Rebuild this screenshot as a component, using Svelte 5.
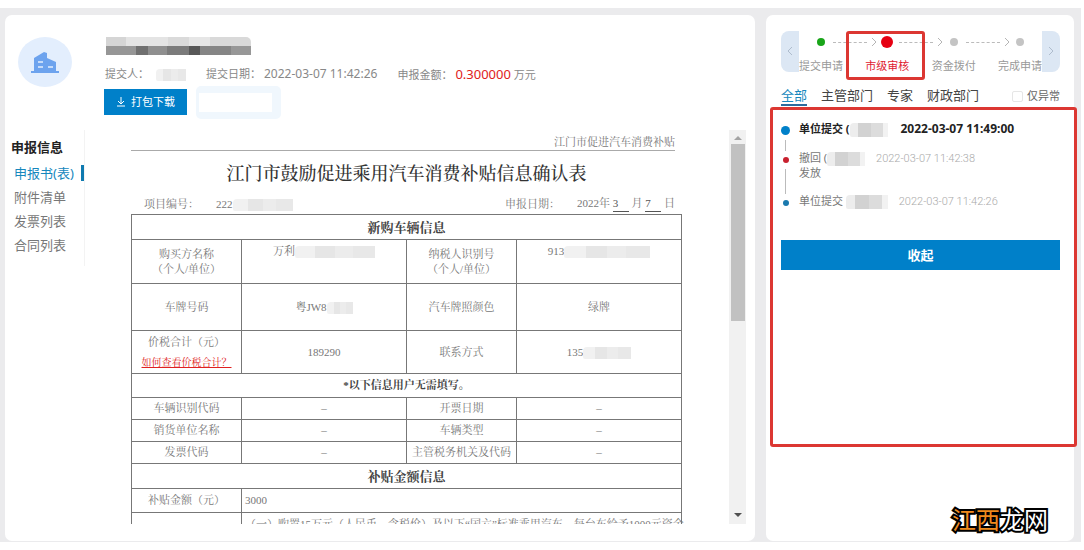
<script>
  const menu = ['申报书(表)', '附件清单', '发票列表', '合同列表'];
  const tabs = ['全部', '主管部门', '专家', '财政部门'];
  const steps = [
    { name: '提交申请', state: 'done' },
    { name: '市级审核', state: 'current' },
    { name: '资金拨付', state: 'todo' },
    { name: '完成申请', state: 'todo' }
  ];
  const extraRows = [
    ['车辆识别代码', '开票日期'],
    ['销货单位名称', '车辆类型'],
    ['发票代码', '主管税务机关及代码']
  ];

  let activeMenu = $state('申报书(表)');
  let activeTab = $state('全部');
  let onlyAbnormal = $state(false);
</script>

<div class="page">
  <main class="card detail">
    <header class="head">
      <div class="avatar">
        <svg width="30" height="24" viewBox="0 0 30 24" aria-hidden="true">
          <path d="M4 21V8l10-6 3 1v5l9 4v9h3v2H1v-2z" fill="#6da3ee" />
          <path d="M8 12h5M8 17h5M18 17h5" stroke="#e3eefd" stroke-width="1.4" />
        </svg>
      </div>
      <div class="head-info">
        <div class="title-mask"></div>
        <p class="facts">
          <span>提交人：<i class="mask name"></i></span>
          <span>提交日期：<b>2022-03-07 11:42:26</b></span>
          <span>申报金额：<em>0.300000</em> 万元</span>
        </p>
        <div class="actions">
          <button class="download">
            <svg width="10" height="10" viewBox="0 0 10 10" aria-hidden="true">
              <path d="M5 0v6M2 4l3 3 3-3M1 9h8" fill="none" stroke="#fff" />
            </svg>
            打包下载
          </button>
          <span class="ghost"></span>
        </div>
      </div>
    </header>

    <div class="body">
      <nav class="side">
        <h2>申报信息</h2>
        {#each menu as item}
          <button class:active={item === activeMenu} onclick={() => (activeMenu = item)}>{item}</button>
        {/each}
      </nav>

      <div class="doc">
        <p class="doc-head">江门市促进汽车消费补贴</p>
        <h1>江门市鼓励促进乘用汽车消费补贴信息确认表</h1>
        <div class="doc-meta">
          <span>项目编号：</span>
          <span class="number">222<i class="mask number-mask"></i></span>
          <span class="date-label">申报日期：</span>
          <span>2022年 <u>3</u> 月 <u>7</u> 日</span>
        </div>
        <table>
          <colgroup>
            <col class="key" />
            <col class="value" />
            <col class="key" />
            <col class="value" />
          </colgroup>
          <tbody>
            <tr class="section"><th colspan="4">新购车辆信息</th></tr>
            <tr class="buyer">
              <td>购买方名称<br />（个人/单位）</td>
              <td class="top">万利<i class="mask w80"></i></td>
              <td>纳税人识别号<br />（个人/单位）</td>
              <td class="top">913<i class="mask w86"></i></td>
            </tr>
            <tr class="plate">
              <td>车牌号码</td>
              <td>粤JW8<i class="mask w26"></i></td>
              <td>汽车牌照颜色</td>
              <td>绿牌</td>
            </tr>
            <tr class="price">
              <td>价税合计（元）<a href="#help">如何查看价税合计？</a></td>
              <td>189290</td>
              <td>联系方式</td>
              <td>135<i class="mask w48"></i></td>
            </tr>
            <tr class="note"><th colspan="4">*以下信息用户无需填写。</th></tr>
            {#each extraRows as [left, right]}
              <tr class="extra">
                <td>{left}</td>
                <td>–</td>
                <td>{right}</td>
                <td>–</td>
              </tr>
            {/each}
            <tr class="section"><th colspan="4">补贴金额信息</th></tr>
            <tr class="amount">
              <td>补贴金额（元）</td>
              <td class="left" colspan="3">3000</td>
            </tr>
            <tr class="rule">
              <td></td>
              <td class="left" colspan="3">（一）购置15万元（人民币，含税价）及以下“国六”标准乘用汽车，每台车给予1000元资金</td>
            </tr>
          </tbody>
        </table>
      </div>

      <div class="scrollbar">
        <span class="arrow up"></span>
        <span class="thumb"></span>
        <span class="arrow down"></span>
      </div>
    </div>
  </main>

  <aside class="card progress">
    <div class="steps">
      <button class="prev" aria-label="上一步">
        <svg width="6" height="10" viewBox="0 0 6 10"><path d="M5 1L1 5l4 4" fill="none" stroke="#aebccd" /></svg>
      </button>
      <ol>
        {#each steps as step, i}
          <li class={step.state}>
            <span class="dot"></span>
            {#if i < steps.length - 1}
              <span class="link">
                <svg width="6" height="10" viewBox="0 0 6 10"><path d="M1 1l4 4-4 4" fill="none" stroke="#b5b5b5" /></svg>
              </span>
            {/if}
            <span class="label">{step.name}</span>
          </li>
        {/each}
      </ol>
      <button class="next" aria-label="下一步">
        <svg width="6" height="10" viewBox="0 0 6 10"><path d="M1 1l4 4-4 4" fill="none" stroke="#aebccd" /></svg>
      </button>
    </div>

    <div class="tabs">
      {#each tabs as tab}
        <button class:active={tab === activeTab} onclick={() => (activeTab = tab)}>{tab}</button>
      {/each}
      <label><input type="checkbox" bind:checked={onlyAbnormal} />仅异常</label>
    </div>

    <section class="history">
      <ul>
        <li class="latest">
          <span class="who">单位提交 (<i class="mask dark w38"></i></span>
          <time>2022-03-07 11:49:00</time>
        </li>
        <li class="back">
          <span class="who">撤回 (<i class="mask dark w38"></i></span>
          <time>2022-03-07 11:42:38</time>
          <p>发放</p>
        </li>
        <li>
          <span class="who">单位提交 <i class="mask dark w42"></i></span>
          <time>2022-03-07 11:42:26</time>
        </li>
      </ul>
      <button class="fold">收起</button>
    </section>
  </aside>

  <div class="brand"><span>江西</span>龙网</div>
</div>

<style>
  :global(body) {
    margin: 0;
    background: #fff;
  }
  .page {
    position: relative;
    display: flex;
    gap: 11px;
    box-sizing: border-box;
    height: 100vh;
    padding: 7px 7px 1px 5px;
    border: solid #fff;
    border-width: 8px 3px 8px 0;
    background: #ebebed;
    font-family: 'Noto Sans', 'Noto Sans CJK SC', sans-serif;
    font-size: 11px;
    line-height: 16px;
    color: #888;
  }
  button {
    padding: 0;
    border: 0;
    background: none;
    font: inherit;
    color: inherit;
    cursor: pointer;
  }
  h1, h2, p, ul, ol { margin: 0; padding: 0; }
  ul, ol { list-style: none; }
  .card {
    display: flex;
    flex-direction: column;
    box-sizing: border-box;
    background: #fff;
    border-radius: 7px;
  }
  .detail { flex: 750; min-width: 0; }
  .progress { flex: 308; min-width: 0; }

  /* blurred-out private data */
  .mask {
    display: inline-block;
    height: 12px;
    vertical-align: middle;
    border-radius: 4px 0 0 2px;
    background: linear-gradient(90deg, #f1f1f1 0 25%, #e6e6e6 25% 50%, #ececec 50% 72%, #e8e8e8 72%);
  }
  .mask.dark {
    height: 14px;
    background: linear-gradient(90deg, #ededed 0 22%, #d2d2d2 22% 55%, #dcdcdc 55% 86%, #f2f2f2 86%);
  }
  .name { width: 30px; margin-left: 7px; }
  .w26 { width: 26px; }
  .w38 { width: 38px; }
  .w42 { width: 42px; }
  .w48 { width: 48px; }
  .w80 { width: 80px; }
  .w86 { width: 86px; }

  /* header */
  .head { display: flex; padding: 22px 13px 0; }
  .avatar {
    display: flex;
    align-items: center;
    justify-content: center;
    width: 54px;
    height: 50px;
    border-radius: 50%;
    background: #e3eefd;
  }
  .head-info { flex: 1; padding-left: 32px; }
  .title-mask {
    width: 145px;
    height: 18px;
    margin-left: 2px;
    background:
      linear-gradient(90deg, #969696 0 21%, #707070 21% 29%, #8f8f8f 29% 42%, #7b7b7b 42% 57%, #585858 57% 65%, #858585 65% 86%, #979797 86%) 0 9px / 100% 9px no-repeat,
      linear-gradient(90deg, #d5d5d5 0 14%, #e4e4e4 14% 43%, #dadada 43% 57%, #e6e6e6 57% 72%, #d9d9d9 72%);
    border-radius: 0 5px 0 0;
  }
  .facts { display: flex; gap: 20px; margin: 11px 0 0 1px; white-space: nowrap; }
  .facts b { margin-left: 3px; font-size: 12px; font-weight: 400; }
  .facts em { margin-left: 3px; font-size: 13px; font-style: normal; color: #e02020; }
  .actions { display: flex; align-items: center; height: 38px; gap: 9px; }
  .download {
    display: flex;
    align-items: center;
    justify-content: center;
    gap: 5px;
    width: 83px;
    height: 26px;
    background: #0080c9;
    color: #fff;
  }
  .ghost {
    width: 73px;
    height: 19px;
    border: solid #f0f7fd;
    border-width: 7px 9px 7px 3px;
    border-radius: 5px;
  }

  /* side menu + document */
  .body { display: flex; flex: 1; min-height: 0; margin: 9px 9px 17px 0; }
  .side {
    display: flex;
    flex-direction: column;
    align-items: stretch;
    gap: 8px;
    align-self: flex-start;
    width: 80px;
    box-sizing: border-box;
    height: 136px;
    padding: 9px 0 0 0;
    border-right: 1px solid #f3f3f3;
    font-size: 13px;
    white-space: nowrap;
  }
  .side h2 {
    margin: 0 0 2px 6px;
    font-size: 13px;
    line-height: 16px;
    color: #222;
  }
  .side button { padding-left: 9px; text-align: left; color: #777; border-right: 3px solid transparent; }
  .side .active { color: #1687bd; border-color: #0f7ab0; }

  .doc {
    flex: 1;
    min-width: 0;
    overflow: hidden;
    padding: 5px 47px 0 46px;
    font-family: 'Liberation Serif', 'Noto Serif CJK SC', 'Noto Sans CJK SC', serif;
    line-height: 15px;
    color: #777;
  }
  .doc-head {
    margin-right: 7px;
    border-bottom: 1px solid #aaa;
    text-align: right;
  }
  h1 {
    margin-top: 11px;
    font-size: 18px;
    line-height: 24px;
    font-weight: 500;
    text-align: center;
    color: #333;
    white-space: nowrap;
  }
  .doc-meta { display: flex; align-items: center; height: 20px; margin: 8px 7px 0 13px; white-space: nowrap; }
  .number { margin-left: 17px; }
  .number-mask { width: 60px; }
  .date-label { margin: 0 17px 0 auto; }
  .doc-meta u {
    display: inline-block;
    width: 16px;
    border-bottom: 1px solid #555;
    text-decoration: none;
    color: #555;
  }
  table {
    width: 100%;
    border-collapse: collapse;
    table-layout: fixed;
  }
  .key { width: 20%; }
  .value { width: 30%; }
  td, th {
    box-sizing: border-box;
    padding: 0;
    border: 1px solid #777;
    text-align: center;
    white-space: nowrap;
  }
  th { color: #444; }
  .section th { height: 25px; font-size: 13px; }
  .buyer td { height: 44px; }
  .plate td { height: 47px; }
  .price td { height: 43px; }
  .note th { height: 24px; }
  .extra td { height: 22px; }
  .amount td, .rule td { height: 24px; }
  td.top { padding-top: 4px; vertical-align: top; }
  td.left { padding-left: 3px; text-align: left; }
  td a { display: block; margin-top: 5px; font-size: 10px; color: #e02020; }

  .scrollbar {
    display: flex;
    flex-direction: column;
    align-items: center;
    width: 17px;
    background: #f1f1f1;
  }
  .arrow { border: solid transparent; border-width: 4px; }
  .up { margin: 2px 0 4px; border-bottom-color: #a3a3a3; }
  .down { margin: auto 0 3px; border-top-color: #505050; }
  .thumb { width: 14px; height: 45%; background: #c1c1c1; }

  /* progress */
  .steps { display: flex; margin: 16px 14px 0 15px; height: 41px; }
  .prev, .next { width: 18px; background: #dce7f4; }
  .prev { border-radius: 8px 0 0 8px; }
  .next { border-radius: 0 8px 8px 0; }
  .steps ol { display: flex; flex: 1; min-width: 0; justify-content: space-between; }
  .steps li {
    position: relative;
    display: flex;
    flex-direction: column;
    align-items: center;
    justify-content: space-between;
    width: 44px;
    white-space: nowrap;
  }
  .dot { width: 8px; height: 8px; margin-top: 7px; border-radius: 50%; background: #c4c4c4; }
  .done .dot { background: #19a519; }
  .current .dot { width: 12px; height: 12px; margin-top: 5px; background: #e60012; }
  .current .label { color: #e02030; }
  .link {
    position: absolute;
    top: 6px;
    left: 34px;
    display: flex;
    align-items: center;
    gap: 4px;
    width: 44px;
  }
  .link::before { content: ''; flex: 1; border-top: 1px dashed #bbb; }
  .steps .current::after {
    content: '';
    position: absolute;
    inset: 0 -16px -8px -19px;
    border: 3px solid #dc3732;
    border-radius: 3px;
  }
  .label { color: #999; line-height: 12px; }

  .tabs {
    display: flex;
    align-items: center;
    gap: 14px;
    margin: 14px 14px 0 15px;
    font-size: 13px;
    line-height: 18px;
    white-space: nowrap;
    color: #444;
  }
  .tabs button { border-bottom: 2px solid transparent; }
  .tabs .active { color: #1687bd; border-color: #2b6c9e; }
  .tabs label { display: flex; align-items: center; gap: 4px; margin-left: auto; font-size: 11px; color: #666; }
  .tabs input {
    appearance: none;
    width: 11px;
    height: 11px;
    margin: 0;
    border: 1px solid #e6e6e6;
    border-radius: 2px;
  }

  .history {
    position: relative;
    flex: 1;
    margin: 1px -3px 94px 4px;
    padding: 12px 14px 0 8px;
    border: 3px solid #dc3732;
    border-radius: 3px;
  }
  .history li { position: relative; padding: 0 0 14px 18px; line-height: 14px; white-space: nowrap; }
  .history li::before {
    content: '';
    position: absolute;
    top: 6px;
    left: 2px;
    width: 6px;
    height: 6px;
    border-radius: 50%;
    background: #1a79ae;
  }
  .history li:not(:last-child)::after {
    content: '';
    position: absolute;
    top: 18px;
    bottom: 0;
    left: 4px;
    border-left: 1px solid #bbb;
  }
  .history .latest::before { top: 4px; left: 0; width: 9px; height: 9px; background: #0080c9; }
  .history .back::before { background: #c8202f; }
  .history .who { color: #777; }
  .history time { margin-left: 8px; font-family: Roboto, sans-serif; font-weight: 300; color: #aaa; }
  .history .latest .who { font-weight: 700; color: #222; }
  .history .latest time { margin-left: 10px; font-family: inherit; font-size: 12px; font-weight: 700; color: #222; }
  .history p { color: #777; }
  .fold {
    width: 100%;
    height: 30px;
    margin-top: 17px;
    background: #0080c9;
    font-size: 13px;
    font-weight: 700;
    color: #fff;
  }

  .brand {
    position: absolute;
    right: 33px;
    bottom: 6px;
    font-size: 24px;
    line-height: 32px;
    color: #fff;
    -webkit-text-stroke: 4px #000;
    paint-order: stroke fill;
  }
  .brand span { color: #f08a1d; }
</style>
